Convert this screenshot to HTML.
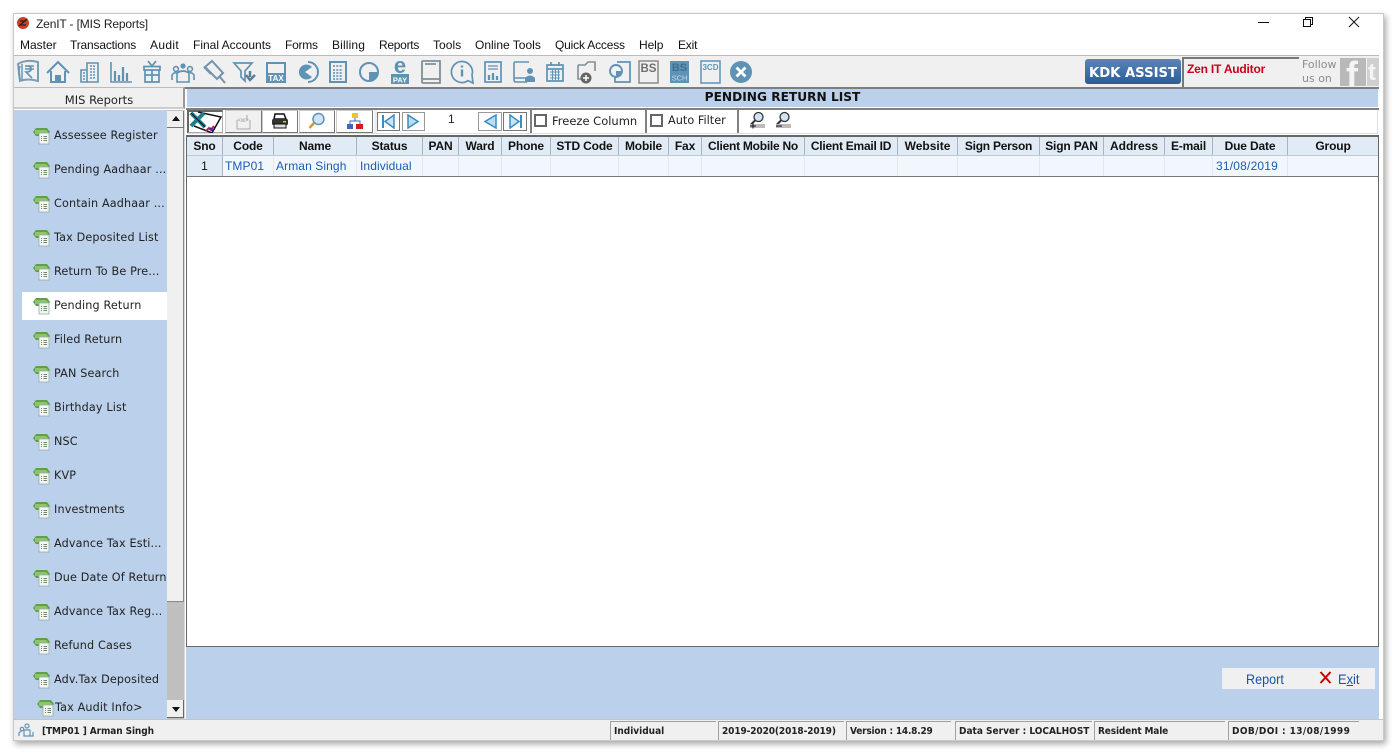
<!DOCTYPE html>
<html><head><meta charset="utf-8"><style>
html,body{margin:0;padding:0;background:#fff;width:1398px;height:753px;overflow:hidden}
body{position:relative;font-family:"Liberation Sans",sans-serif;color:#111}
.a{position:absolute}
.t{position:absolute;white-space:nowrap}
.m{font-size:12px;top:38px;color:#111}
.side{font-family:"DejaVu Sans",sans-serif;font-size:11.2px;letter-spacing:.15px;left:54px;color:#222;white-space:nowrap;position:absolute;line-height:14px;margin-top:1px}
.th{position:absolute;margin-left:1px;top:137px;height:19px;line-height:18px;font-size:12px;font-weight:bold;letter-spacing:-.15px;text-align:center;background:#e1ebf5;border-right:1px solid #a8b4be;box-sizing:border-box;color:#111;white-space:nowrap}
.td{position:absolute;margin-left:1px;top:156px;height:20px;line-height:20px;font-size:12px;letter-spacing:.1px;background:#f1f7fd;border-right:1px solid #e2e8ee;box-sizing:border-box;color:#1c5bb5;white-space:nowrap;padding-left:3px}
.st{position:absolute;top:721px;height:19px;line-height:20px;font-family:"DejaVu Sans Condensed","DejaVu Sans",sans-serif;font-stretch:condensed;font-weight:bold;font-size:10px;color:#222;border-left:1px solid #a0a0a0;border-top:1px solid #a0a0a0;box-sizing:border-box;padding-left:3px;white-space:nowrap;background:#f0f0f0}
.btn{position:absolute;top:110px;height:23px;background:#fff;border:1px solid #777;border-left-color:#ccc;border-top-color:#ccc;box-sizing:border-box}
</style></head><body>
<!-- window -->
<div class="a" style="left:13px;top:13px;width:1371px;height:728px;background:#fff;border:1px solid #c9c9c9;box-sizing:border-box;box-shadow:2px 3px 6px rgba(0,0,0,.35)"></div>

<!-- title -->
<svg class="a" style="left:16px;top:16px" width="14" height="14"><circle cx="7" cy="7" r="6" fill="#c9401f"/><path d="M3 10L11 3M4 5h6M5 9h5" stroke="#222" stroke-width="1.300" fill="none"/></svg>
<div class="t" style="left:36px;top:17px;font-size:12px;letter-spacing:-.15px;color:#222">ZenIT - [MIS Reports]</div>
<div class="a" style="left:1258px;top:22px;width:11px;height:1px;background:#111"></div>
<svg class="a" style="left:1302px;top:16px" width="12" height="12" fill="none" stroke="#111"><path d="M1.500 3.500h7v7h-7zM3.500 3.500v-2h7v7h-2"/></svg>
<svg class="a" style="left:1348px;top:16px" width="12" height="12" fill="none" stroke="#111"><path d="M1 1l10 10M11 1L1 11"/></svg>

<!-- menu -->
<div class="t m" style="left:20px">Master</div>
<div class="t m" style="left:70px;letter-spacing:-.18px">Transactions</div>
<div class="t m" style="left:150px;letter-spacing:.35px">Audit</div>
<div class="t m" style="left:193px">Final Accounts</div>
<div class="t m" style="left:285px;letter-spacing:-.25px">Forms</div>
<div class="t m" style="left:332px;letter-spacing:.15px">Billing</div>
<div class="t m" style="left:379px;letter-spacing:-.28px">Reports</div>
<div class="t m" style="left:433px;letter-spacing:.05px">Tools</div>
<div class="t m" style="left:475px">Online Tools</div>
<div class="t m" style="left:555px;letter-spacing:-.18px">Quick Access</div>
<div class="t m" style="left:639px;letter-spacing:-.1px">Help</div>
<div class="t m" style="left:678px;letter-spacing:-.2px">Exit</div>

<!-- toolbar -->
<div class="a" style="left:14px;top:55px;width:1365px;height:32px;background:#f0f0f0;border-top:1px solid #bbb;box-sizing:border-box"></div>
<svg class="a" style="left:14px;top:56px" width="760" height="32" fill="none" stroke="#5f93b5" stroke-width="2" font-family="Liberation Sans" font-weight="bold">
<!-- rupee -->
<path d="M4 8Q12 3 24 6V25Q14 22 6 25Z" stroke="#7a9db5"/><path d="M8 8V24M6 10Q4 16 6 24" stroke-width="1.400"/>
<path d="M11 10h9M11 13h9M12 10q6 0 5 4q-1 2-5 2l6 6" stroke-width="1.600"/>
<!-- home -->
<path d="M33 17L44 6L55 17M37 15V26H51V15" /><rect x="41" y="19" width="6" height="7" fill="#5f93b5" stroke="none"/>
<!-- building -->
<path d="M67 14H73V26H67zM73 7H84V26H73z" stroke-width="1.600"/><path d="M76 10h5M76 13h5M76 16h5M76 19h5M76 22h5M69 17h2M69 20h2M69 23h2" stroke-width="1.500" stroke-dasharray="2 1"/>
<!-- bars -->
<path d="M97 6V26H118" stroke-width="1.600"/><path d="M101 15v10M105 19v6M109 11v14M113 17v8" stroke-width="2.200"/>
<!-- gift -->
<path d="M131 14H145V26H131zM131 19H145M138 14V26M130 10.500H146V14H130z" stroke-width="1.700"/><path d="M138 10L134 5M138 10L142 5" stroke-width="1.800"/>
<!-- people -->
<circle cx="162" cy="13" r="2.400" stroke-width="1.600"/><circle cx="169" cy="10" r="2.600" fill="#5f93b5" stroke="none"/><circle cx="176" cy="13" r="2.400" stroke-width="1.600"/><path d="M158 24V19Q160 16 163 17M180 24V19Q178 16 175 17M163 26V17Q169 13 175 17V26Z" stroke-width="1.600"/>
<!-- pin -->
<path d="M191 11L198 5L209 17L203 23ZM197 18L190 11M206 21L211 27" stroke="#7195ad" stroke-width="2"/>
<!-- filter -->
<path d="M220 7H238L231 15V25L227 21V15Z" stroke-width="1.700"/><path d="M236 15V21M232 19L236 24L241 19" stroke-width="2.500" stroke="#5a7f99"/>
<!-- tax -->
<rect x="253" y="7" width="18" height="19" stroke-width="2"/><rect x="253" y="17" width="18" height="9" fill="#5f93b5" stroke="none"/><text x="262" y="25" font-size="8" fill="#fff" stroke="none" text-anchor="middle">TAX</text>
<!-- pie -->
<path d="M294 6A10 10 0 1 1 294 26" stroke-width="2"/><path d="M298 11A7.500 7.500 0 1 0 298 21L291 16Z" fill="#5f93b5" stroke="none"/>
<!-- calc -->
<rect x="316" y="6" width="16" height="20" stroke-width="2"/><path d="M319 10h10M319 14h10M319 17h10M319 20h10M319 23h10" stroke-width="2" stroke-dasharray="2 1.300" stroke="#7aa4c0"/>
<!-- circle -->
<circle cx="355" cy="16" r="9"/><path d="M355 16h9A9 9 0 0 1 355 25Z" fill="#5f93b5" stroke="none"/>
<!-- pay -->
<text x="386" y="17" font-size="22" fill="#5f93b5" stroke="none" text-anchor="middle">e</text>
<rect x="377" y="18" width="18" height="10" fill="#5f93b5" stroke="none"/><text x="386" y="26.500" font-size="7.500" fill="#fff" stroke="none" text-anchor="middle">PAY</text>
<!-- book -->
<path d="M409 5H426V27H409Q408 27 408 25V6Q408 5 409 5ZM408 23H426M411 8H422" stroke="#7f8f98" stroke-width="1.800"/>
<!-- info -->
<path d="M454 24.600A10.500 10.500 0 1 1 458 19L459 27Z" stroke-width="1.700"/><path d="M448 9.500v2M448 13.500v7" stroke-width="2.400"/>
<!-- report -->
<rect x="471" y="6" width="16" height="20" stroke-width="1.700"/><path d="M474 10h10M474 13h10" stroke-width="1.200"/><path d="M475 24v-5M479 24v-7M483 24v-4" stroke-width="2.300"/>
<!-- contact -->
<path d="M515 6H501Q500 6 500 8V24Q500 26 502 26H513M500 22H512" stroke-width="1.600"/><circle cx="516" cy="15" r="3" fill="#5f93b5" stroke="none"/><path d="M511 26V22Q516 17 521 22V26Z" fill="#5f93b5" stroke="none"/>
<!-- calendar -->
<path d="M533 9H549V25H533zM533 13H549M537 6V10M545 6V10" stroke-width="1.700"/><path d="M536 16h10M536 19h10M536 22h10M538.500 14v10M541.500 14v10M544.500 14v10" stroke-width="1"/>
<!-- folder -->
<path d="M564 9V23H570M564 9H571L574 6H581V15" stroke="#7f8f98" stroke-width="1.600"/><circle cx="572" cy="22" r="5.500" fill="#666" stroke="none"/><path d="M569 22h6M572 19v6" stroke="#fff" stroke-width="1.500"/>
<!-- circle doc -->
<path d="M603 6H616V26H601V21" stroke-width="1.700"/><circle cx="602" cy="15" r="6" stroke-width="1.900" fill="#f0f0f0"/><path d="M602 15h5.500A5.500 5.500 0 0 1 602 20.500Z" fill="#5f93b5" stroke="none"/>
<!-- BS -->
<rect x="625" y="5" width="19" height="22" stroke="#8a8a8a" stroke-width="1.500"/><text x="634.500" y="16" font-size="11.500" fill="#6f6f6f" stroke="none" text-anchor="middle">BS</text>
<!-- BS SCH -->
<rect x="656" y="5" width="19" height="22" fill="#5f93b5" stroke="none"/><text x="665.500" y="15" font-size="11" fill="#3e6f91" stroke="none" text-anchor="middle">BS</text><text x="665.500" y="24.500" font-size="7.500" fill="#c7dbe8" stroke="none" text-anchor="middle" font-weight="normal">SCH</text>
<!-- 3CD -->
<rect x="687" y="5" width="19" height="22" stroke-width="1.500"/><text x="696.500" y="14" font-size="8" fill="#5f93b5" stroke="none" text-anchor="middle">3CD</text>
<!-- X -->
<circle cx="727" cy="16" r="11" fill="#5f93b5" stroke="none"/><path d="M722.500 11.500L731.500 20.500M731.500 11.500L722.500 20.500" stroke="#fff" stroke-width="2.800"/>
</svg>

<!-- KDK -->
<div class="t" style="left:1085px;top:59px;width:96px;height:25px;line-height:25px;border-radius:3px;background:linear-gradient(#5a86b8,#2a5c98);color:#fff;font-weight:bold;text-align:center;font-family:'DejaVu Sans',sans-serif;overflow:hidden"><span style="font-size:13.200px">KDK ASSIST</span></div>
<div class="a" style="left:1182px;top:57px;width:117px;height:30px;border:2px solid #777;border-right:0;border-bottom:0;box-sizing:border-box;background:#f0f0f0"></div>
<div class="t" style="left:1187px;top:62px;font-size:12px;font-weight:bold;letter-spacing:-.2px;color:#c8001e">Zen IT Auditor</div>
<div class="t" style="left:1302px;top:58px;font-family:'DejaVu Sans',sans-serif;font-size:11px;color:#8c8c8c;line-height:13.500px">Follow<br>us on</div>
<div class="a" style="left:1340px;top:58px;width:26px;height:28px;background:#b9b9b9;overflow:hidden"><div class="t" style="left:6px;top:-1px;font-size:36px;font-weight:bold;color:#f4f4f4;line-height:36px">f</div></div>
<div class="a" style="left:1367px;top:58px;width:12px;height:28px;background:#d0d0d0;overflow:hidden"><div class="t" style="left:1px;top:3px;font-size:24px;font-weight:bold;color:#f4f4f4;line-height:24px">t</div></div>

<!-- left header -->
<div class="a" style="left:14px;top:87px;width:171px;height:22px;background:#f0f0f0;border-top:1px solid #bbb;border-right:2px solid #999;border-bottom:2px solid #ccc;box-sizing:border-box"></div>
<div class="t" style="left:14px;width:170px;text-align:center;top:93px;font-family:'DejaVu Sans',sans-serif;font-size:11.500px;color:#222">MIS Reports</div>

<!-- right title -->
<div class="a" style="left:185px;top:87px;width:1194px;height:2px;background:#7e7e7e"></div>
<div class="a" style="left:187px;top:89px;width:1191px;height:18px;background:#bbd0ea"></div>
<div class="t" style="left:187px;width:1191px;text-align:center;top:90px;font-family:'DejaVu Sans',sans-serif;font-weight:bold;font-size:12.200px;color:#111">PENDING RETURN LIST</div>
<div class="a" style="left:186px;top:108px;width:1193px;height:2px;background:#808080"></div>

<!-- sidebar -->
<div class="a" style="left:14px;top:110px;width:153px;height:609px;background:#bbd0ea"></div>
<div class="a" style="left:22px;top:292px;width:146px;height:28px;background:#fff"></div>
<div class="a" style="left:167px;top:110px;width:18px;height:609px;background:#bfbfbf;border-right:1px solid #d8d8d8;box-sizing:border-box"></div>
<div class="a" style="left:167px;top:111px;width:17px;height:17px;background:#f0f0f0;border-right:1px solid #777;border-bottom:1px solid #777;box-sizing:border-box"></div>
<div class="a" style="left:172px;top:116px;border:4px solid transparent;border-bottom:5px solid #111;border-top:0"></div>
<div class="a" style="left:167px;top:128px;width:17px;height:474px;background:#f0f0f0;border-right:1px solid #888;border-bottom:1px solid #888;box-sizing:border-box"></div>
<div class="a" style="left:167px;top:700px;width:17px;height:18px;background:#f0f0f0;border-right:1px solid #666;border-bottom:1px solid #666;box-sizing:border-box"></div>
<div class="a" style="left:172px;top:707px;border:4px solid transparent;border-top:5px solid #111;border-bottom:0"></div>

<svg width="0" height="0" style="position:absolute"><defs><g id="ic"><path d="M0 4L3 0H14L17 4L14 8H3Z" fill="#5fa04a"/><path d="M2 2H13L15 4L13 6H2Z" fill="#8cc56c"/><rect x="6" y="5" width="10" height="11" fill="#f4f6f6" stroke="#9aa" stroke-width=".8"/><path d="M8 8.500h1M8 10.500h1M8 12.500h1M10.500 8.500h3.500M10.500 10.500h3.500M10.500 12.500h3.500" stroke="#6d8a6d" stroke-width="1"/></g></defs></svg>
<svg class="a" style="left:0;top:0" width="60" height="725" viewBox="0 0 60 725">
<use href="#ic" x="33" y="128"/><use href="#ic" x="33" y="162"/><use href="#ic" x="33" y="196"/><use href="#ic" x="33" y="230"/><use href="#ic" x="33" y="264"/><use href="#ic" x="33" y="298"/><use href="#ic" x="33" y="332"/><use href="#ic" x="33" y="366"/><use href="#ic" x="33" y="400"/><use href="#ic" x="33" y="434"/><use href="#ic" x="33" y="468"/><use href="#ic" x="33" y="502"/><use href="#ic" x="33" y="536"/><use href="#ic" x="33" y="570"/><use href="#ic" x="33" y="604"/><use href="#ic" x="33" y="638"/><use href="#ic" x="33" y="672"/><use href="#ic" x="37" y="700"/>
</svg>
<div class="side" style="top:128px">Assessee Register</div>
<div class="side" style="top:162px">Pending Aadhaar ...</div>
<div class="side" style="top:196px">Contain Aadhaar ...</div>
<div class="side" style="top:230px">Tax Deposited List</div>
<div class="side" style="top:264px">Return To Be Pre...</div>
<div class="side" style="top:298px">Pending Return</div>
<div class="side" style="top:332px">Filed Return</div>
<div class="side" style="top:366px">PAN Search</div>
<div class="side" style="top:400px">Birthday List</div>
<div class="side" style="top:434px">NSC</div>
<div class="side" style="top:468px">KVP</div>
<div class="side" style="top:502px">Investments</div>
<div class="side" style="top:536px">Advance Tax Esti...</div>
<div class="side" style="top:570px">Due Date Of Return</div>
<div class="side" style="top:604px">Advance Tax Reg...</div>
<div class="side" style="top:638px">Refund Cases</div>
<div class="side" style="top:672px">Adv.Tax Deposited</div>
<div class="side" style="top:700px;left:55px">Tax Audit Info&gt;</div>

<!-- grid toolbar -->
<div class="a" style="left:187px;top:110px;width:1191px;height:24px;background:#fff"></div>
<div class="btn" style="left:187px;width:36px;border:2px solid #666;border-right:1px solid #aaa;border-bottom:1px solid #aaa"></div>
<svg class="a" style="left:188px;top:110px" width="36" height="24" fill="none"><path d="M10 2L33 7L24 23L6 16" stroke="#111" stroke-width="1.500" fill="#fff"/><path d="M3 3L17 17M16 3L3 16" stroke="#1f7f8f" stroke-width="4"/><path d="M3 3L17 17" stroke="#111" stroke-width="1" /><path d="M18 21l3-3 2 2 3-4" stroke="#c2185b" stroke-width="2"/><path d="M22 18l3 3" stroke="#2233bb" stroke-width="2"/></svg>
<div class="btn" style="left:225px;width:37px;background:#f0f0f0"></div>
<svg class="a" style="left:235px;top:113px" width="17" height="17" fill="none" stroke="#aaa"><path d="M2 7v9h13V7M12 7V2" /><text x="8" y="9" font-size="6" fill="#999" stroke="none" text-anchor="middle">&lt;w&gt;</text></svg>
<div class="btn" style="left:262px;width:36px"></div>
<svg class="a" style="left:271px;top:113px" width="18" height="17"><path d="M4 1h9l2 5H3z" fill="#fff" stroke="#111" stroke-width="1.500"/><rect x="1" y="6" width="16" height="6" rx="1.500" fill="#333"/><rect x="3" y="11" width="12" height="4" fill="#ddd" stroke="#111"/><rect x="12" y="8" width="3" height="1.500" fill="#d4c14a"/></svg>
<div class="btn" style="left:299px;width:36px"></div>
<svg class="a" style="left:308px;top:112px" width="18" height="18"><circle cx="10.500" cy="7" r="5.500" fill="#cfe5f5" stroke="#5f93b5" stroke-width="1.500"/><path d="M6 11L1.500 16" stroke="#d39a3a" stroke-width="2.500"/></svg>
<div class="btn" style="left:336px;width:37px"></div>
<svg class="a" style="left:347px;top:113px" width="16" height="17"><rect x="5" y="0" width="6" height="5" fill="#efc233"/><rect x="0" y="11" width="6" height="5" fill="#3f66c4"/><rect x="9" y="11" width="7" height="5" fill="#cf1d1d"/><path d="M8 5v3H3v3M8 8h5v3" stroke="#3f66c4" fill="none"/></svg>
<div class="a" style="left:374px;top:110px;width:3px;height:23px;background:#eee"></div>

<div class="btn" style="left:377px;width:23px;top:112px;height:19px;border:1px solid #777"></div>
<svg class="a" style="left:381px;top:114px" width="16" height="15"><path d="M2 1v13" stroke="#3d8cc0" stroke-width="2"/><path d="M13 1v13L4 7.500z" fill="#c9e6f6" stroke="#3d8cc0" stroke-width="1.500"/></svg>
<div class="btn" style="left:402px;width:23px;top:112px;height:19px;border:1px solid #999"></div>
<svg class="a" style="left:406px;top:114px" width="15" height="15"><path d="M2 1v13l10-6.500z" fill="#b9def3" stroke="#3d8cc0" stroke-width="1.500"/></svg>
<div class="t" style="left:448px;top:112px;font-size:12px;color:#222">1</div>
<div class="btn" style="left:478px;width:24px;top:112px;height:19px;border:1px solid #999"></div>
<svg class="a" style="left:483px;top:114px" width="15" height="15"><path d="M13 1v13L2 7.500z" fill="#b9def3" stroke="#3d8cc0" stroke-width="1.500"/></svg>
<div class="btn" style="left:503px;width:24px;top:112px;height:19px;border:1px solid #777"></div>
<svg class="a" style="left:507px;top:114px" width="16" height="15"><path d="M14 1v13" stroke="#3d8cc0" stroke-width="2"/><path d="M3 1v13l9-6.500z" fill="#c9e6f6" stroke="#3d8cc0" stroke-width="1.500"/></svg>

<div class="a" style="left:530px;top:110px;width:2px;height:23px;background:#808080"></div>
<div class="a" style="left:534px;top:114px;width:13px;height:13px;border:2px solid #666;box-sizing:border-box;background:#fff"></div>
<div class="t" style="left:552px;top:114px;font-family:'DejaVu Sans',sans-serif;font-size:11.500px;color:#222">Freeze Column</div>
<div class="a" style="left:645px;top:110px;width:2px;height:23px;background:#808080"></div>
<div class="a" style="left:650px;top:114px;width:13px;height:13px;border:2px solid #666;box-sizing:border-box;background:#fff"></div>
<div class="t" style="left:668px;top:114px;font-family:'DejaVu Sans',sans-serif;font-size:11.300px;color:#222">Auto Filter</div>
<div class="a" style="left:737px;top:110px;width:2px;height:23px;background:#808080"></div>
<svg class="a" style="left:748px;top:111px" width="18" height="18"><circle cx="10.500" cy="6" r="4.500" fill="#cfe5f5" stroke="#333" stroke-width="1.300"/><path d="M7 9.500L3 13.500" stroke="#333" stroke-width="2"/><rect x="2" y="13" width="15" height="4" fill="#bbb"/><path d="M2 15h6M5 12.500v5" stroke="#111"/></svg>
<svg class="a" style="left:774px;top:111px" width="18" height="18"><circle cx="10.500" cy="6" r="4.500" fill="#cfe5f5" stroke="#333" stroke-width="1.300"/><path d="M7 9.500L3 13.500" stroke="#333" stroke-width="2"/><rect x="2" y="13" width="15" height="4" fill="#bbb"/><path d="M2 15h6" stroke="#111"/></svg>
<div class="a" style="left:1377px;top:110px;width:1px;height:24px;background:#ddd"></div>
<div class="a" style="left:187px;top:133px;width:1191px;height:1px;background:#ddd"></div>

<!-- grid -->
<div class="a" style="left:186px;top:135px;width:1193px;height:512px;background:#fff;border:1px solid #666;border-top:2px solid #666;box-sizing:border-box"></div>
<div class="th" style="left:186px;width:36px">Sno</div>
<div class="th" style="left:222px;width:51px">Code</div>
<div class="th" style="left:273px;width:83px">Name</div>
<div class="th" style="left:356px;width:66px">Status</div>
<div class="th" style="left:422px;width:36px">PAN</div>
<div class="th" style="left:458px;width:43px">Ward</div>
<div class="th" style="left:501px;width:49px">Phone</div>
<div class="th" style="left:550px;width:68px">STD Code</div>
<div class="th" style="left:618px;width:50px">Mobile</div>
<div class="th" style="left:668px;width:33px">Fax</div>
<div class="th" style="left:701px;width:103px;letter-spacing:-.25px">Client Mobile No</div>
<div class="th" style="left:804px;width:93px;letter-spacing:-.25px">Client Email ID</div>
<div class="th" style="left:897px;width:60px;letter-spacing:0">Website</div>
<div class="th" style="left:957px;width:82px;letter-spacing:-.25px">Sign Person</div>
<div class="th" style="left:1039px;width:64px">Sign PAN</div>
<div class="th" style="left:1103px;width:61px;letter-spacing:0">Address</div>
<div class="th" style="left:1164px;width:48px">E-mail</div>
<div class="th" style="left:1212px;width:75px">Due Date</div>
<div class="th" style="left:1287px;width:90px;border-right:0">Group</div>
<div class="a" style="left:187px;top:155px;width:1191px;height:1px;background:#bcc8d2"></div>

<div class="td" style="left:186px;width:36px;background:#e1ebf5;border-right:1px solid #a8b4be;color:#111;text-align:center;padding:0">1</div>
<div class="td" style="left:222px;width:51px;padding-left:2px">TMP01</div>
<div class="td" style="left:273px;width:83px;padding-left:2px">Arman Singh</div>
<div class="td" style="left:356px;width:66px">Individual</div>
<div class="td" style="left:422px;width:36px"></div>
<div class="td" style="left:458px;width:43px"></div>
<div class="td" style="left:501px;width:49px"></div>
<div class="td" style="left:550px;width:68px"></div>
<div class="td" style="left:618px;width:50px"></div>
<div class="td" style="left:668px;width:33px"></div>
<div class="td" style="left:701px;width:103px"></div>
<div class="td" style="left:804px;width:93px"></div>
<div class="td" style="left:897px;width:60px"></div>
<div class="td" style="left:957px;width:82px"></div>
<div class="td" style="left:1039px;width:64px"></div>
<div class="td" style="left:1103px;width:61px"></div>
<div class="td" style="left:1164px;width:48px"></div>
<div class="td" style="left:1212px;width:75px;padding-left:3px;letter-spacing:.2px">31/08/2019</div>
<div class="td" style="left:1287px;width:90px;border-right:0"></div>
<div class="a" style="left:187px;top:176px;width:1191px;height:1px;background:#777"></div>

<!-- lower blue -->
<div class="a" style="left:186px;top:647px;width:1193px;height:72px;background:#bbd0ea"></div>
<div class="a" style="left:1222px;top:668px;width:153px;height:21px;background:#f0f0f0"></div>
<div class="t" style="left:1246px;top:671px;font-size:14px;color:#1c4fb0;transform:scaleX(.9);transform-origin:left">Report</div>
<svg class="a" style="left:1319px;top:671px" width="13" height="13"><path d="M1.500 1L11.500 12M11.500 1L1.500 12" stroke="#c00" stroke-width="2"/></svg>
<div class="t" style="left:1338px;top:671px;font-size:14px;color:#1c4fb0;transform:scaleX(.92);transform-origin:left">E<u>x</u>it</div>

<!-- status bar -->
<div class="a" style="left:14px;top:719px;width:1369px;height:21px;background:#f0f0f0;border-top:1px solid #c4c4c4;box-sizing:border-box"></div>
<svg class="a" style="left:18px;top:723px" width="17" height="15" fill="none" stroke="#5f93b5" stroke-width="1.200"><circle cx="9" cy="3" r="2"/><circle cx="4" cy="6" r="1.700"/><path d="M1 13V9.500L4 8M6 13V7H12V13ZM6 13H15V9"/></svg>
<div class="st" style="left:14px;top:722px;border:0;background:none;padding-left:28px;width:590px;letter-spacing:-.1px">[TMP01 ] Arman Singh</div>
<div class="st" style="left:610px;width:106px">Individual</div>
<div class="st" style="left:718px;width:126px;letter-spacing:-.1px">2019-2020(2018-2019)</div>
<div class="st" style="left:846px;width:105px;letter-spacing:-.2px">Version : 14.8.29</div>
<div class="st" style="left:955px;width:137px">Data Server : LOCALHOST</div>
<div class="st" style="left:1094px;width:131px;letter-spacing:-.15px">Resident Male</div>
<div class="st" style="left:1228px;width:131px;letter-spacing:.4px">DOB/DOI : 13/08/1999</div>
</body></html>
